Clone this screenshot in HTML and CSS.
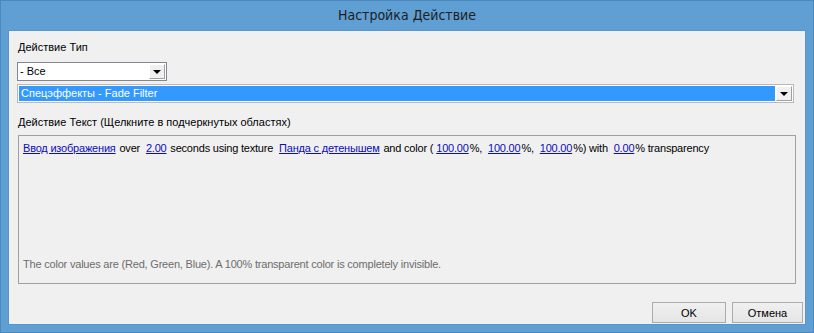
FILE: index.html
```html
<!DOCTYPE html>
<html>

<head>
    <meta charset="utf-8">
    <link rel="stylesheet" href="styles.css">
</head>

<body>
    <div class="window">
        <div class="titlebar">Настройка Действие</div>
        <div class="client">
            <div class="label first">Действие Тип</div>
            <div class="combo small">
                <span class="combo-text">- Все</span>
                <span class="combo-btn"><span class="arrow"></span></span>
            </div>
            <div class="combo wide">
                <span class="combo-text selected">Спецэффекты - Fade Filter</span>
                <span class="combo-btn"><span class="arrow"></span></span>
            </div>
            <div class="label second">Действие Текст (Щелкните в подчеркнутых областях)</div>
            <div class="textbox">
                <div class="action-line"><a class="link">Ввод изображения</a> over <a class="link">2.00</a> seconds using texture <a class="link">Панда с детенышем</a> and color (<a class="link">100.00</a>%, <a class="link">100.00</a>%, <a class="link">100.00</a>%) with <a class="link">0.00</a>% transparency</div>
                <div class="hint">The color values are (Red, Green, Blue). A 100% transparent color is completely invisible.</div>
            </div>
            <div class="buttons">
                <button class="btn ok">OK</button>
                <button class="btn cancel">Отмена</button>
            </div>
        </div>
    </div>
</body>

</html>
```

FILE: styles.css
```css
* {
    box-sizing: border-box;
}

body {
    margin: 0;
    width: 814px;
    height: 333px;
    overflow: hidden;
    font-family: "Liberation Sans", Arial, sans-serif;
    font-size: 11px;
    color: #000;
}

.window {
    width: 814px;
    height: 333px;
    background-color: #5f9fd3;
    border: 1px solid #4a88c0;
    display: flex;
    flex-direction: column;
}

.titlebar {
    height: 29px;
    line-height: 29px;
    text-align: center;
    font-family: "Liberation Sans Narrow", "DejaVu Sans Condensed", "Liberation Sans", sans-serif;
    font-size: 14px;
    color: #1e1e1e;
}

.client {
    flex: 1;
    margin: 0 7px 7px 7px;
    background-color: #f0f0f0;
    border: 1px solid #5a95c9;
    padding: 0 2px 0 8px;
    display: flex;
    flex-direction: column;
}

.label {
    height: 13px;
    line-height: 13px;
    padding-left: 1px;
}

.label.first {
    margin-top: 10px;
}

.label.second {
    margin-top: 13px;
}

.combo {
    height: 19px;
    display: flex;
    background-color: #fff;
    border: 1px solid #828790;
    padding: 1px;
}

.combo.small {
    width: 150px;
    margin-top: 8px;
}

.combo.wide {
    width: 777px;
    margin-top: 3px;
    border-color: #b9b9b9;
}

.combo-text {
    flex: 1;
    line-height: 15px;
    padding-left: 1px;
    white-space: nowrap;
}

.combo-text.selected {
    background-color: #3399ff;
    color: #fff;
    padding-left: 2px;
}

.combo-btn {
    width: 16px;
    margin-left: 1px;
    background-color: #f0f0f0;
    border-top: 1px solid #fff;
    border-left: 1px solid #fff;
    border-right: 1px solid #a0a0a0;
    border-bottom: 1px solid #a0a0a0;
    display: flex;
    align-items: center;
    justify-content: center;
}

.arrow {
    width: 0;
    height: 0;
    border-left: 4px solid transparent;
    border-right: 4px solid transparent;
    border-top: 4px solid #000;
    margin-top: 1px;
}

.textbox {
    width: 778px;
    height: 149px;
    margin-top: 6px;
    margin-left: 1px;
    border: 1px solid #a0a0a0;
    padding: 5px 4px 12px 4px;
    display: flex;
    flex-direction: column;
    justify-content: space-between;
    letter-spacing: -0.2px;
}

.action-line {
    line-height: 14px;
    white-space: nowrap;
}

.link {
    color: #0c0cc0;
    text-decoration: underline;
    margin: 0 1px 0 3px;
    cursor: pointer;
}

.link:first-child {
    margin-left: 0;
}

.hint {
    line-height: 13px;
    color: #6d6d6d;
}

.buttons {
    margin-top: 18px;
    display: flex;
    justify-content: flex-end;
    gap: 6px;
}

.btn {
    height: 21px;
    font-family: "Liberation Sans", Arial, sans-serif;
    font-size: 11px;
    color: #000;
    background: linear-gradient(#f0f0f0, #e5e5e5);
    border: 1px solid #acacac;
    padding: 0;
}

.btn.ok {
    width: 74px;
}

.btn.cancel {
    width: 71px;
}
```
